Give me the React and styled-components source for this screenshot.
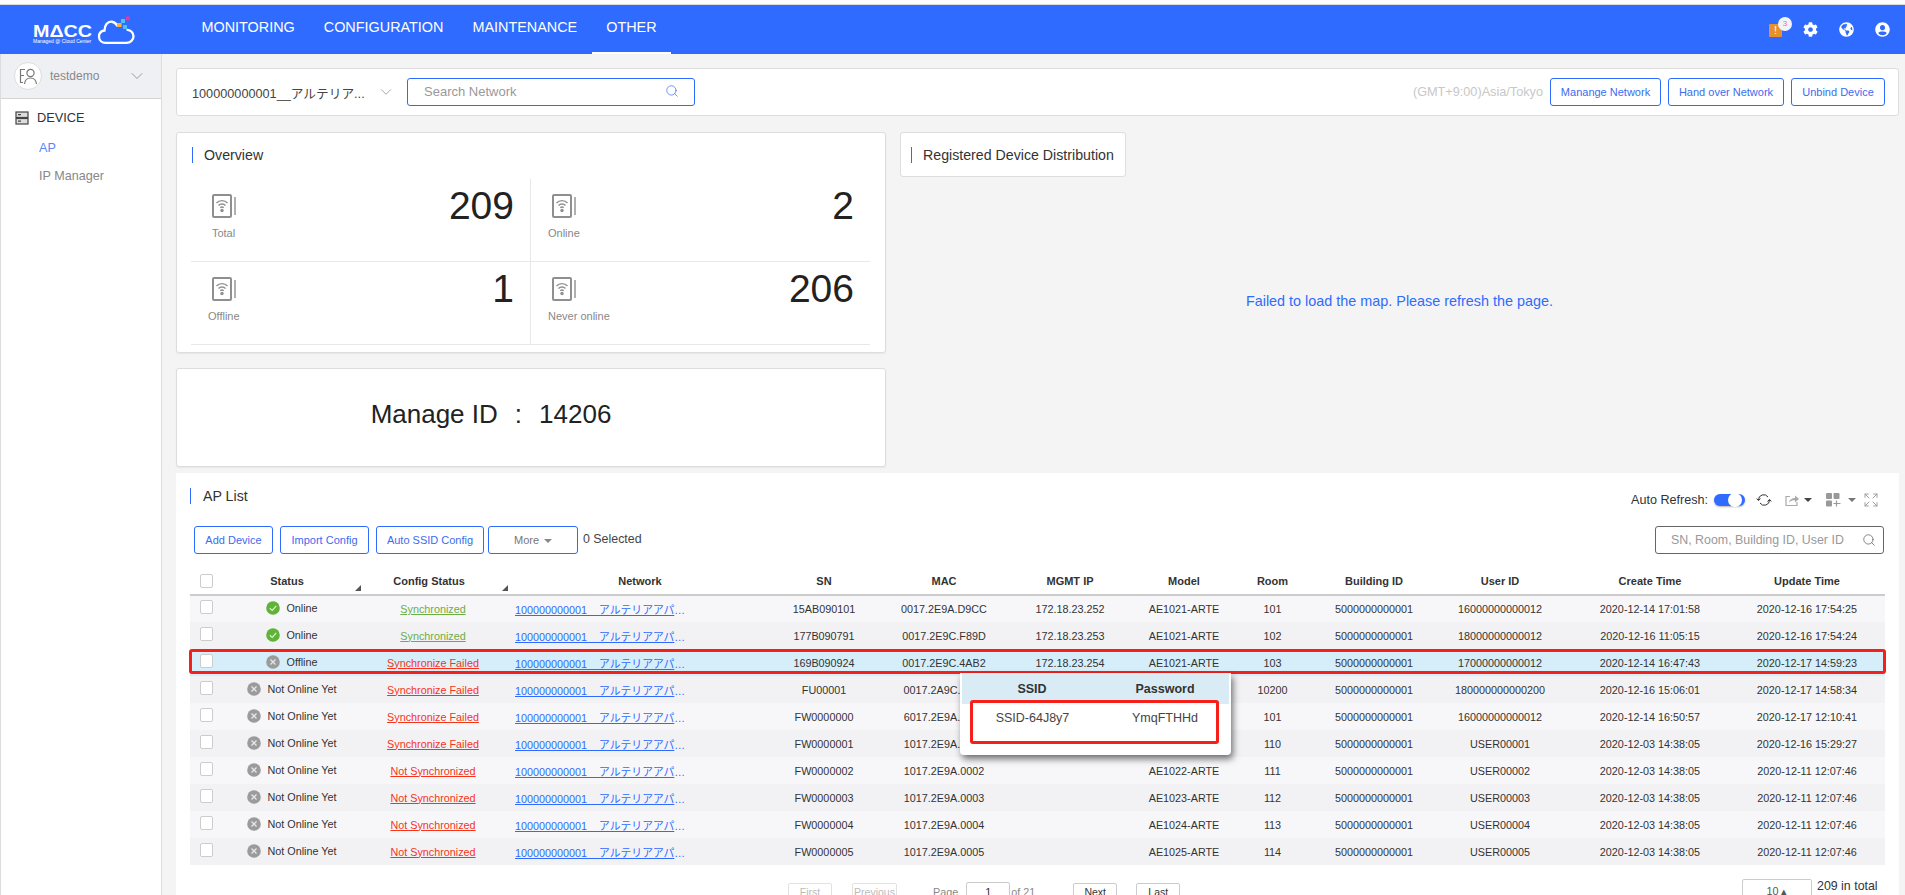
import React from 'react';
import styled, { createGlobalStyle } from 'styled-components';
import { ChevronDown, Search, Expand } from 'lucide-react';
import { FaCog, FaGlobeAmericas, FaUserCircle } from 'react-icons/fa';

const GlobalStyle = createGlobalStyle`
  html, body {
    margin: 0;
    height: 100%;
    overflow: hidden;
    background: #f4f4f4;
  }
  body, input, button {
    font-family: "Liberation Sans", "Noto Sans CJK JP", sans-serif;
  }
  * {
    box-sizing: border-box;
  }
`;

const Page = styled.div`
  height: 895px;
  overflow: hidden;
  display: flex;
  flex-direction: column;
`;

const TopStrip = styled.div`
  height: 5px;
  flex: none;
  background: #fff;
  border-bottom: 1px solid #ddd;
`;

const Header = styled.header`
  height: 49px;
  flex: none;
  display: flex;
  align-items: stretch;
  padding: 0 15px 0 30px;
  background: #2f6bff;
`;

const LogoBox = styled.div`
  width: 108px;
  margin-right: 49px;
  display: flex;
  align-items: center;
`;

const Nav = styled.nav`
  display: flex;
`;

const NavItem = styled.a`
  display: flex;
  align-items: center;
  padding: 0 14.5px 3px;
  color: #fff;
  font-size: 14.4px;
  border-bottom: 2px solid ${p => (p.$active ? '#fff' : 'transparent')};
`;

const HeaderIcons = styled.div`
  margin-left: auto;
  display: flex;
  align-items: center;
  gap: 21px;
  color: #fff;
  font-size: 15px;
  svg {
    display: block;
  }
`;

const AlertIcon = styled.div`
  position: relative;
  width: 13px;
  height: 13px;
  margin-top: 1px;
  border-radius: 1px;
  background: #e8902e;
  color: #fff;
  font-size: 11px;
  line-height: 13px;
  text-align: center;
`;

const AlertBadge = styled.span`
  position: absolute;
  top: -7px;
  right: -10px;
  width: 14px;
  height: 14px;
  border-radius: 50%;
  background: #f2f3f8;
  color: #e77;
  font-size: 8px;
  line-height: 14px;
`;

const Body = styled.div`
  flex: 1;
  min-height: 0;
  display: flex;
`;

const Sidebar = styled.aside`
  width: 162px;
  flex: none;
  background: #fff;
  border-left: 1px solid #ddd;
  border-right: 1px solid #ddd;
`;

const UserRow = styled.div`
  height: 45px;
  display: flex;
  align-items: center;
  padding: 0 14px 0 13px;
  background: #eff0f4;
  border-bottom: 1px solid #d4d4d4;
  color: #888;
  font-size: 12px;
`;

const Avatar = styled.div`
  width: 28px;
  height: 28px;
  margin-right: 8px;
  border-radius: 50%;
  border: 1px solid #ddd;
  background: #fff;
  display: flex;
  align-items: center;
  justify-content: center;
`;

const UserName = styled.span`
  flex: 1;
`;

const SideGroup = styled.div`
  display: flex;
  align-items: center;
  gap: 8px;
  padding: 11px 0 0 14px;
  color: #333;
  font-size: 12.8px;
  line-height: 16px;
`;

const SideLink = styled.a`
  display: block;
  margin: ${p => (p.$first ? '14px' : '12px')} 0 0 38px;
  color: ${p => (p.$active ? '#5b85f0' : '#888')};
  font-size: 12.6px;
  line-height: 16px;
`;

const Main = styled.main`
  flex: 1;
  min-width: 0;
  padding: 14px 6px 0 14px;
`;

const Panel = styled.section`
  background: #fff;
  border: 1px solid #ddd;
  border-radius: 3px;
`;

const NetworkBar = styled(Panel)`
  height: 48px;
  margin-bottom: 16px;
  display: flex;
  align-items: center;
  padding: 0 13px 0 15px;
`;

const NetworkName = styled.div`
  width: 173px;
  color: #444;
  font-size: 12.7px;
  white-space: nowrap;
`;

const SearchBox = styled.div`
  width: ${p => p.$width};
  height: 28px;
  display: flex;
  align-items: center;
  justify-content: space-between;
  padding: ${p => p.$padding};
  border: 1px solid ${p => p.$border};
  border-radius: 3px;
  background: #fff;
  color: #999;
  font-size: ${p => p.$size};
`;

const SelectArrow = styled.span`
  width: 42px;
  display: flex;
  justify-content: center;
  color: #888;
`;

const Timezone = styled.span`
  margin-left: auto;
  margin-right: 7px;
  color: #c8c8c8;
  font-size: 12.7px;
`;

const OutlineButton = styled.button`
  height: 28px;
  width: ${p => p.$width};
  margin-left: ${p => p.$gap || '0'};
  padding: 0;
  background: #fff;
  border: 1px solid #2f6bff;
  border-radius: 3px;
  color: ${p => p.$color || '#3b6cf0'};
  font-size: 11px;
`;

const ButtonRow = styled.div`
  display: flex;
  gap: 7px;
`;

const Dashboard = styled.div`
  display: flex;
  gap: 14px;
  height: 335px;
`;

const LeftColumn = styled.div`
  width: 710px;
  flex: none;
  display: flex;
  flex-direction: column;
  gap: 15px;
`;

const OverviewPanel = styled(Panel)`
  height: 221px;
  padding: 14px 15px 0;
  box-shadow: 0 1px 2px rgba(0, 0, 0, 0.06);
`;

const PanelTitle = styled.h3`
  margin: 0;
  height: 16px;
  padding-left: 11px;
  border-left: 1px solid #2f6bff;
  color: #333;
  font-size: 14.2px;
  font-weight: 400;
  line-height: 16px;
`;

const StatGrid = styled.div`
  display: grid;
  grid-template-columns: 339px 340px;
  grid-auto-rows: 83px;
  margin: 16px 0 0 -1px;
`;

const StatCell = styled.div`
  display: flex;
  justify-content: space-between;
  padding: 15px 16px 0 17px;
  border-bottom: 1px solid #e8e8e8;
  border-left: ${p => (p.$right ? '1px solid #e8e8e8' : 'none')};
`;

const StatLabelBlock = styled.div`
  display: flex;
  flex-direction: column;
  align-items: flex-start;
`;

const StatIconWrap = styled.div`
  width: 31px;
  display: flex;
  justify-content: center;
`;

const StatLabel = styled.span`
  min-width: 31px;
  margin-top: 9px;
  color: #888;
  font-size: 11px;
  line-height: 13px;
  text-align: center;
`;

const StatValue = styled.span`
  margin-top: -11px;
  color: #222;
  font-size: 39px;
  line-height: 46px;
`;

const ManagePanel = styled(Panel)`
  height: 99px;
  display: flex;
  align-items: center;
  justify-content: center;
  padding: 0 80px 7px 0;
  color: #222;
  font-size: 26px;
  box-shadow: 0 1px 2px rgba(0, 0, 0, 0.06);
`;

const ManageColon = styled.span`
  margin: 0 17px;
`;

const MapPane = styled.div`
  flex: 1;
  display: flex;
  flex-direction: column;
`;

const MapTitleCard = styled(Panel)`
  width: 226px;
  height: 45px;
  padding: 14px 0 0 10px;
`;

const MapMessage = styled.div`
  flex: 1;
  display: flex;
  align-items: center;
  justify-content: center;
  padding-bottom: 42px;
  color: #2f6bff;
  font-size: 14.4px;
`;

const ListPanel = styled.section`
  margin-top: 6px;
  padding: 15px 14px 0;
  height: 440px;
  background: #fff;
`;

const ListHead = styled.div`
  display: flex;
  justify-content: space-between;
  height: 38px;
`;

const ListTitle = styled(PanelTitle)`
  padding-left: 12px;
`;

const Tools = styled.div`
  display: flex;
  align-items: center;
  height: 24px;
  color: #333;
  font-size: 12.6px;
`;

const Toggle = styled.span`
  position: relative;
  width: 31px;
  height: 12px;
  margin: 0 11px 0 6px;
  border-radius: 6px;
  background: #2f6bff;
  box-shadow: 0 1px 2px rgba(0, 0, 0, 0.3);
`;

const ToggleKnob = styled.span`
  position: absolute;
  top: -1px;
  right: 3px;
  width: 14px;
  height: 14px;
  border-radius: 50%;
  background: #fff;
`;

const ToolIcon = styled.span`
  display: flex;
  align-items: center;
  margin-left: ${p => p.$gap || '0'};
  color: ${p => p.$color || '#999'};
`;

const Caret = styled.span`
  width: 0;
  height: 0;
  margin: ${p => p.$margin};
  border-left: 4px solid transparent;
  border-right: 4px solid transparent;
  border-top: 4px solid ${p => p.$color};
`;

const ActionRow = styled.div`
  display: flex;
  align-items: center;
  height: 34px;
  padding: 0 1px 6px 4px;
`;

const SmallCaret = styled.span`
  display: inline-block;
  margin-left: 5px;
  vertical-align: 1px;
  border-left: 4px solid transparent;
  border-right: 4px solid transparent;
  border-top: 4px solid #888;
`;

const SelectedCount = styled.span`
  margin: 0 auto -1px 5px;
  padding-bottom: 4px;
  color: #444;
  font-size: 12.4px;
`;

const TableWrap = styled.div`
  position: relative;
`;

const Table = styled.table`
  width: 1695px;
  table-layout: fixed;
  border-collapse: collapse;
  color: #333;
  font-size: 10.8px;
`;

const HeadCell = styled.th`
  position: relative;
  height: 35px;
  padding: 7px ${p => p.$padRight || '0'} 0 ${p => p.$padLeft || '0'};
  border-bottom: 2px solid #ccc;
  font-size: 11px;
  font-weight: 700;
  text-align: center;
`;

const SortMark = styled.span`
  position: absolute;
  bottom: 3px;
  right: ${p => p.$right};
  width: 0;
  height: 0;
  border-left: 6px solid transparent;
  border-bottom: 6px solid #555;
`;

const Row = styled.tr`
  height: 27px;
  background: ${p => (p.$selected ? '#d6eefa' : p.$odd ? '#f7f7fa' : '#f2f2f5')};
`;

const Cell = styled.td`
  padding: 0;
  text-align: center;
  white-space: nowrap;
`;

const LinkCell = styled(Cell)`
  padding-left: 11px;
  text-align: left;
`;

const Check = styled.input.attrs({ type: 'checkbox' })`
  appearance: none;
  display: block;
  width: 13px;
  height: 14px;
  margin: ${p => (p.$head ? '0 0 0 10px' : '-4px 0 0 10px')};
  background: #fff;
  border: 1px solid #ccc;
  border-radius: 2px;
`;

const StatusWrap = styled.span`
  display: inline-flex;
  align-items: center;
  gap: 6px;
`;

const ConfigLink = styled.a`
  color: ${p => (p.$ok ? '#6aae45' : '#f5341a')};
  text-decoration: underline;
`;

const NetworkLink = styled.a`
  display: block;
  width: 172px;
  overflow: hidden;
  text-overflow: ellipsis;
  color: #2f6bff;
  text-decoration: underline;
`;

const RowMark = styled.div`
  position: absolute;
  top: 89px;
  left: -1px;
  right: -1px;
  height: 25px;
  border: 3px solid #f5201a;
  border-radius: 3px;
`;

const Popup = styled.div`
  position: absolute;
  top: 113px;
  left: 770px;
  width: 271px;
  height: 82px;
  padding: 0 2px;
  background: #fff;
  border-radius: 0 0 4px 4px;
  box-shadow: 2px 4px 7px rgba(0, 0, 0, 0.55);
`;

const PopupHead = styled.div`
  height: 31px;
  display: grid;
  grid-template-columns: 140px 126px;
  align-items: center;
  justify-items: center;
  background: #d9ecf5;
  color: #333;
  font-size: 12.5px;
  font-weight: 700;
`;

const PopupBody = styled.div`
  position: relative;
  height: 44px;
  margin: -4px 0 0 8px;
  width: 249px;
  padding-top: 8px;
  display: grid;
  grid-template-columns: 119px 100px;
  column-gap: 23px;
  justify-items: center;
  align-items: start;
  border: 3px solid #f5201a;
  border-radius: 3px;
  background: #fff;
  color: #444;
  font-size: 12.5px;
`;

const Pager = styled.div`
  display: flex;
  align-items: flex-start;
  margin-top: 14px;
  padding-left: 598px;
`;

const PageButton = styled.button`
  width: ${p => p.$width};
  height: 26px;
  margin: 4px ${p => p.$after} 0 0;
  padding: 0 0 8px;
  background: #fff;
  border: 1px solid ${p => (p.$off ? '#e2e2e2' : '#ccc')};
  border-radius: 2px;
  color: ${p => (p.$off ? '#bbb' : '#333')};
  font-size: 10.5px;
`;

const PageText = styled.span`
  margin: 7px ${p => p.$after} 0 0;
  color: #888;
  font-size: 10.8px;
  line-height: 13px;
`;

const PageInput = styled.div`
  width: 44px;
  height: 26px;
  margin: 3px 1px 0 0;
  padding-top: 3px;
  border: 1px solid #ccc;
  border-radius: 2px;
  color: #333;
  font-size: 11px;
  text-align: center;
`;

const PageSize = styled.div`
  width: 70px;
  height: 30px;
  margin-left: auto;
  padding-top: 5px;
  border: 1px solid #ccc;
  border-radius: 2px;
  color: #555;
  font-size: 10.8px;
  text-align: center;
`;

const TotalText = styled.span`
  width: 73px;
  padding-left: 5px;
  color: #333;
  font-size: 12.4px;
`;

const WifiIcon = () => (
  <svg width="24" height="24" viewBox="0 0 24 24" fill="none" stroke="#8f8f8f">
    <rect x="1" y="1" width="18" height="22" rx="1" strokeWidth="2" />
    <line x1="23" y1="3" x2="23" y2="21" strokeWidth="1.8" stroke="#a8a8a8" />
    <path d="M4.500 9a7.500 7.500 0 0 1 11 0M6.500 11.500a4.800 4.800 0 0 1 7 0M8.300 13.700a2.400 2.400 0 0 1 3.400 0" strokeWidth="1.400" />
    <circle cx="10" cy="16.500" r="1.700" fill="#8f8f8f" stroke="none" />
  </svg>
);

const OkIcon = () => (
  <svg width="14" height="14" viewBox="0 0 14 14">
    <circle cx="7" cy="7" r="6.800" fill="#5fb336" />
    <path d="M3.800 7.200 6.200 9.400 10.300 4.900" fill="none" stroke="#dff2d2" strokeWidth="1.200" />
  </svg>
);

const OffIcon = () => (
  <svg width="14" height="14" viewBox="0 0 14 14">
    <circle cx="7" cy="7" r="6.800" fill="#9b9b9b" />
    <path d="M4.500 4.500l5 5M9.500 4.500l-5 5" fill="none" stroke="#e6e6e6" strokeWidth="1.300" />
  </svg>
);

const Logo = () => (
  <svg width="108" height="34" viewBox="0 0 108 34" fill="none">
    <text transform="translate(3 24) scale(1.16 1)" fill="#fff" fontSize="17" fontWeight="700" fontFamily="Liberation Sans">
      MΔCC
    </text>
    <text transform="translate(3 30)" fill="#fff" fontSize="5" fontFamily="Liberation Sans">
      Managed @ Cloud Center
    </text>
    <path
      d="M87 12.500C84.500 8 79.500 7.500 76.500 11 74.500 13.500 74.500 15.500 74.500 17.500 71 18 68.800 20.500 69 24c.2 3.500 3 5.800 6.500 5.800H96.500c4 0 7-2.800 7-6.500 0-3.800-3-6.300-6-6.500"
      stroke="#fff"
      strokeWidth="2.300"
      strokeLinecap="round"
    />
    <rect x="96" y="3.500" width="4" height="4" fill="#e5399b" />
    <rect x="91" y="6" width="4" height="4" fill="#4fc3f7" />
    <rect x="87" y="10" width="4.500" height="4" fill="#f7b733" />
    <rect x="93" y="12" width="4" height="4" fill="#4fc3f7" />
  </svg>
);

const AvatarIcon = () => (
  <svg width="20" height="20" viewBox="0 0 20 20" fill="none" stroke="#777" strokeWidth="1.200">
    <circle cx="12.500" cy="7" r="3.600" />
    <path d="M6.500 18c.4-3.800 2.800-6 6-6s5.600 2.200 6 6" />
    <path d="M7 3.500H2.500v6H6M2.500 9.500v7H5" />
  </svg>
);

const DeviceIcon = () => (
  <svg width="14" height="14" viewBox="0 0 14 14" fill="none" stroke="#444" strokeWidth="1.200">
    <rect x="1" y="1" width="12" height="5.500" fill="#ddd" />
    <rect x="1" y="7.500" width="12" height="5.500" fill="#ddd" />
    <path d="M3 3.700h3M3 10.200h3" />
  </svg>
);

const RefreshIcon = () => (
  <svg width="16" height="14" viewBox="0 0 16 14" fill="none" stroke="#333" strokeWidth="1">
    <path d="M2.500 7a5.200 5.200 0 0 1 9.500-3M13.500 7a5.200 5.200 0 0 1-9.500 3" />
    <path d="M0.700 5.500 2.500 7.600 4.500 5.600M11.500 8.500l2-2.100 1.800 2.100" />
  </svg>
);

const ExportIcon = () => (
  <svg width="15" height="14" viewBox="0 0 15 14" fill="none" stroke="#aaa" strokeWidth="1.200">
    <path d="M5 3.500H1v9h11V9" />
    <path d="M4 9.500c.5-3 3-4.500 6-4.500V2.500l4 3.500-4 3.500V7.200c-2.500 0-4.500.6-6 2.300z" fill="#aaa" stroke="none" />
  </svg>
);

const ColumnsIcon = () => (
  <svg width="15" height="14" viewBox="0 0 15 14" fill="#999">
    <rect x="0" y="0" width="6" height="6" rx="1" />
    <rect x="7.500" y="0" width="6" height="6" rx="1" />
    <rect x="0" y="7.500" width="6" height="6" rx="1" />
    <path d="M10.500 7.500v6M7.500 10.500h7" stroke="#999" strokeWidth="1.200" />
  </svg>
);

const stats = [
  { label: 'Total', value: '209' },
  { label: 'Online', value: '2', right: true },
  { label: 'Offline', value: '1' },
  { label: 'Never online', value: '206', right: true },
];

const columns = [32, 140, 142, 254, 132, 108, 144, 84, 93, 110, 142, 158, 156];

const heads = ['SN', 'MAC', 'MGMT IP', 'Model', 'Room', 'Building ID', 'User ID', 'Create Time', 'Update Time'];

const devices = [
  ['Online', 'Synchronized', '15AB090101', '0017.2E9A.D9CC', '172.18.23.252', 'AE1021-ARTE', '101', '5000000000001', '16000000000012', '2020-12-14 17:01:58', '2020-12-16 17:54:25'],
  ['Online', 'Synchronized', '177B090791', '0017.2E9C.F89D', '172.18.23.253', 'AE1021-ARTE', '102', '5000000000001', '18000000000012', '2020-12-16 11:05:15', '2020-12-16 17:54:24'],
  ['Offline', 'Synchronize Failed', '169B090924', '0017.2E9C.4AB2', '172.18.23.254', 'AE1021-ARTE', '103', '5000000000001', '17000000000012', '2020-12-14 16:47:43', '2020-12-17 14:59:23'],
  ['Not Online Yet', 'Synchronize Failed', 'FU00001', '0017.2A9C.0001', '', 'AE1021-ARTE', '10200', '5000000000001', '180000000000200', '2020-12-16 15:06:01', '2020-12-17 14:58:34'],
  ['Not Online Yet', 'Synchronize Failed', 'FW0000000', '6017.2E9A.0000', '', 'AE1021-ARTE', '101', '5000000000001', '16000000000012', '2020-12-14 16:50:57', '2020-12-17 12:10:41'],
  ['Not Online Yet', 'Synchronize Failed', 'FW0000001', '1017.2E9A.0001', '', 'AE1021-ARTE', '110', '5000000000001', 'USER00001', '2020-12-03 14:38:05', '2020-12-16 15:29:27'],
  ['Not Online Yet', 'Not Synchronized', 'FW0000002', '1017.2E9A.0002', '', 'AE1022-ARTE', '111', '5000000000001', 'USER00002', '2020-12-03 14:38:05', '2020-12-11 12:07:46'],
  ['Not Online Yet', 'Not Synchronized', 'FW0000003', '1017.2E9A.0003', '', 'AE1023-ARTE', '112', '5000000000001', 'USER00003', '2020-12-03 14:38:05', '2020-12-11 12:07:46'],
  ['Not Online Yet', 'Not Synchronized', 'FW0000004', '1017.2E9A.0004', '', 'AE1024-ARTE', '113', '5000000000001', 'USER00004', '2020-12-03 14:38:05', '2020-12-11 12:07:46'],
  ['Not Online Yet', 'Not Synchronized', 'FW0000005', '1017.2E9A.0005', '', 'AE1025-ARTE', '114', '5000000000001', 'USER00005', '2020-12-03 14:38:05', '2020-12-11 12:07:46'],
];

export default function App() {
  return (
    <Page>
      <GlobalStyle />
      <TopStrip />
      <Header>
        <LogoBox>
          <Logo />
        </LogoBox>
        <Nav>
          <NavItem>MONITORING</NavItem>
          <NavItem>CONFIGURATION</NavItem>
          <NavItem>MAINTENANCE</NavItem>
          <NavItem $active>OTHER</NavItem>
        </Nav>
        <HeaderIcons>
          <AlertIcon>
            !<AlertBadge>3</AlertBadge>
          </AlertIcon>
          <FaCog />
          <FaGlobeAmericas />
          <FaUserCircle />
        </HeaderIcons>
      </Header>
      <Body>
        <Sidebar>
          <UserRow>
            <Avatar>
              <AvatarIcon />
            </Avatar>
            <UserName>testdemo</UserName>
            <ChevronDown size={20} strokeWidth={1} color="#888" />
          </UserRow>
          <SideGroup>
            <DeviceIcon />
            DEVICE
          </SideGroup>
          <SideLink $first $active>AP</SideLink>
          <SideLink>IP Manager</SideLink>
        </Sidebar>
        <Main>
          <NetworkBar>
            <NetworkName>100000000001__アルテリア...</NetworkName>
            <SelectArrow>
              <ChevronDown size={18} strokeWidth={1} />
            </SelectArrow>
            <SearchBox $width="288px" $padding="0 15px 2px 16px" $border="#2f6bff" $size="13px">
              Search Network
              <Search size={14} strokeWidth={1.2} color="#2f6bff" />
            </SearchBox>
            <Timezone>(GMT+9:00)Asia/Tokyo</Timezone>
            <ButtonRow>
              <OutlineButton $width="111px">Manange Network</OutlineButton>
              <OutlineButton $width="116px">Hand over Network</OutlineButton>
              <OutlineButton $width="94px">Unbind Device</OutlineButton>
            </ButtonRow>
          </NetworkBar>

          <Dashboard>
            <LeftColumn>
              <OverviewPanel>
                <PanelTitle>Overview</PanelTitle>
                <StatGrid>
                  {stats.map(s => (
                    <StatCell key={s.label} $right={s.right}>
                      <StatLabelBlock>
                        <StatIconWrap>
                          <WifiIcon />
                        </StatIconWrap>
                        <StatLabel>{s.label}</StatLabel>
                      </StatLabelBlock>
                      <StatValue>{s.value}</StatValue>
                    </StatCell>
                  ))}
                </StatGrid>
              </OverviewPanel>
              <ManagePanel>
                Manage ID<ManageColon>:</ManageColon>14206
              </ManagePanel>
            </LeftColumn>
            <MapPane>
              <MapTitleCard>
                <PanelTitle>Registered Device Distribution</PanelTitle>
              </MapTitleCard>
              <MapMessage>Failed to load the map. Please refresh the page.</MapMessage>
            </MapPane>
          </Dashboard>

          <ListPanel>
            <ListHead>
              <ListTitle>AP List</ListTitle>
              <Tools>
                Auto Refresh:
                <Toggle>
                  <ToggleKnob />
                </Toggle>
                <ToolIcon $color="#333"><RefreshIcon /></ToolIcon>
                <ToolIcon $gap="13px"><ExportIcon /></ToolIcon>
                <Caret $margin="0 0 0 4px" $color="#444" />
                <ToolIcon $gap="14px"><ColumnsIcon /></ToolIcon>
                <Caret $margin="0 0 0 7px" $color="#777" />
                <ToolIcon $gap="7px"><Expand size={16} strokeWidth={1.4} /></ToolIcon>
                <ToolIcon $gap="6px" />
              </Tools>
            </ListHead>
            <ActionRow>
              <ButtonRow>
                <OutlineButton $width="79px">Add Device</OutlineButton>
                <OutlineButton $width="89px">Import Config</OutlineButton>
                <OutlineButton $width="108px">Auto SSID Config</OutlineButton>
              </ButtonRow>
              <OutlineButton $width="90px" $color="#777" $gap="4px">
                More<SmallCaret />
              </OutlineButton>
              <SelectedCount>0 Selected</SelectedCount>
              <SearchBox $width="229px" $padding="0 7px 0 15px" $border="#666" $size="12.4px">
                SN, Room, Building ID, User ID
                <Search size={14} strokeWidth={1.2} color="#555" />
              </SearchBox>
            </ActionRow>
            <TableWrap>
              <Table>
                <colgroup>
                  {columns.map((w, i) => (
                    <col key={i} width={w} />
                  ))}
                </colgroup>
                <thead>
                  <tr>
                    <HeadCell>
                      <Check $head />
                    </HeadCell>
                    <HeadCell $padRight="10px">
                      Status
                      <SortMark $right="1px" />
                    </HeadCell>
                    <HeadCell $padRight="8px">
                      Config Status
                      <SortMark $right="-4px" />
                    </HeadCell>
                    <HeadCell $padLeft="18px">Network</HeadCell>
                    {heads.map(h => (
                      <HeadCell key={h}>{h}</HeadCell>
                    ))}
                  </tr>
                </thead>
                <tbody>
                  {devices.map((d, i) => {
                    const [status, config, ...rest] = d;
                    return (
                      <Row key={d[2]} $odd={i % 2 === 0} $selected={i === 2}>
                        <Cell>
                          <Check />
                        </Cell>
                        <Cell>
                          <StatusWrap>
                            {status === 'Online' ? <OkIcon /> : <OffIcon />}
                            {status}
                          </StatusWrap>
                        </Cell>
                        <Cell>
                          <ConfigLink $ok={config === 'Synchronized'}>{config}</ConfigLink>
                        </Cell>
                        <LinkCell>
                          <NetworkLink>100000000001__アルテリアアパートメント</NetworkLink>
                        </LinkCell>
                        {rest.map((v, j) => (
                          <Cell key={j}>{v}</Cell>
                        ))}
                      </Row>
                    );
                  })}
                </tbody>
              </Table>
              <RowMark />
              <Popup>
                <PopupHead>
                  <span>SSID</span>
                  <span>Password</span>
                </PopupHead>
                <PopupBody>
                  <span>SSID-64J8y7</span>
                  <span>YmqFTHHd</span>
                </PopupBody>
              </Popup>
            </TableWrap>
            <Pager>
              <PageButton $off $width="44px" $after="20px">First</PageButton>
              <PageButton $off $width="45px" $after="36px">Previous</PageButton>
              <PageText $after="8px">Page</PageText>
              <PageInput>1</PageInput>
              <PageText $after="38px">of 21</PageText>
              <PageButton $width="44px" $after="19px">Next</PageButton>
              <PageButton $width="44px" $after="0">Last</PageButton>
              <PageSize>10 ▴</PageSize>
              <TotalText>209 in total</TotalText>
            </Pager>
          </ListPanel>
        </Main>
      </Body>
    </Page>
  );
}
